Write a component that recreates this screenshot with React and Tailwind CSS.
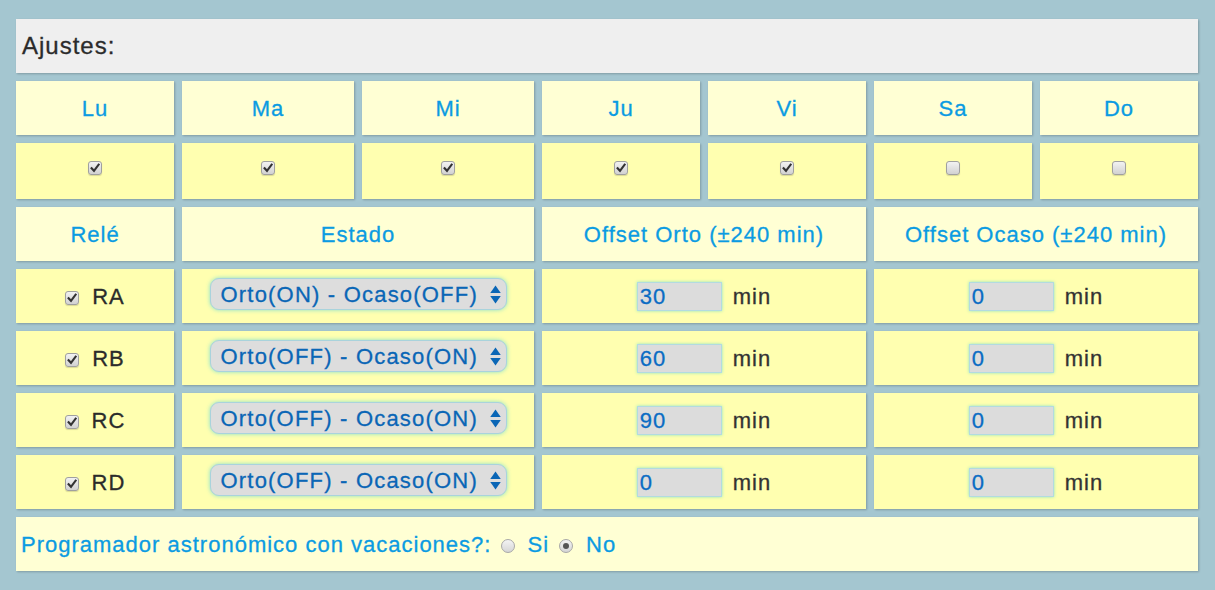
import React from 'react';

const days = [
  { label: 'Lu', on: true },
  { label: 'Ma', on: true },
  { label: 'Mi', on: true },
  { label: 'Ju', on: true },
  { label: 'Vi', on: true },
  { label: 'Sa', on: false },
  { label: 'Do', on: false },
];

const relays = [
  { name: 'RA', estado: 'Orto(ON) - Ocaso(OFF)', orto: '30', ocaso: '0' },
  { name: 'RB', estado: 'Orto(OFF) - Ocaso(ON)', orto: '60', ocaso: '0' },
  { name: 'RC', estado: 'Orto(OFF) - Ocaso(ON)', orto: '90', ocaso: '0' },
  { name: 'RD', estado: 'Orto(OFF) - Ocaso(ON)', orto: '0', ocaso: '0' },
];

const cellShadow = 'shadow-[1px_1px_2px_rgba(0,0,0,0.22)]';
const headCell = `flex items-center justify-center bg-[#ffffd4] text-[#0b9be2] ${cellShadow}`;
const dataCell = `flex items-center justify-center bg-[#ffffb0] ${cellShadow}`;

function Check({ on }) {
  return (
    <span className="inline-flex h-[14px] w-[14px] items-center justify-center rounded-[3px] border border-[#a0a0a0] bg-linear-to-b from-[#f2f2f2] to-[#d2d2d2] shadow-[0_1px_1px_rgba(0,0,0,0.15)]">
      {on && (
        <svg viewBox="0 0 10 10" className="h-[10px] w-[10px]">
          <path d="M1.6 5.2 L4 7.8 L8.6 1.6" stroke="#333" strokeWidth="2.1" fill="none" strokeLinecap="square" />
        </svg>
      )}
    </span>
  );
}

function Radio({ on }) {
  return (
    <span className="inline-flex h-[14px] w-[14px] items-center justify-center rounded-full border border-[#a8a8a8] bg-linear-to-b from-[#f4f4f4] to-[#d6d6d6]">
      {on && <span className="h-[6px] w-[6px] rounded-full bg-[#555]" />}
    </span>
  );
}

function FakeSelect({ value }) {
  return (
    <div className="flex h-[32px] w-[297px] items-center justify-between rounded-[9px] border border-[#a9d3dc] bg-[#dddddd] pl-[10px] pr-[4px] text-[#0a66b6] shadow-[0_0_4px_rgba(120,220,210,0.9)]">
      <span className="tracking-[1.2px]">{value}</span>
      <svg viewBox="0 0 12 20" className="h-[21px] w-[13px]">
        <path d="M6 1.5 L11 8.5 L1 8.5 Z" fill="#0a66b6" />
        <path d="M1 11.5 L11 11.5 L6 18.5 Z" fill="#0a66b6" />
      </svg>
    </div>
  );
}

function MinInput({ value }) {
  return (
    <div className="flex items-center gap-[11px]">
      <div className="flex h-[29px] w-[85px] items-center border border-[#b2dbe0] bg-[#dcdcdc] pl-[2px] text-[#0a6cc4] shadow-[0_0_3px_rgba(130,225,200,0.9)]">
        {value}
      </div>
      <span className="text-[#333]">min</span>
    </div>
  );
}

export default function App() {
  return (
    <div className="min-h-screen bg-[#a4c6d0] pb-[19px] pl-[16px] pr-[17px] pt-[19px] font-['Liberation_Sans',Arial,sans-serif] text-[22px] tracking-[1px] [-webkit-text-stroke:0.3px_currentColor]">
      <div className="grid grid-cols-[158px_172px_172px_158px_158px_158px_158px] grid-rows-[54px_54px_56px_54px_54px_54px_54px_54px_54px] gap-[8px]">
        <div className={`col-span-7 flex items-center bg-[#efefef] pl-[6px] text-[24px] text-[#2b2b2b] ${cellShadow}`}>
          Ajustes:
        </div>

        {days.map((d) => (
          <div key={d.label} className={headCell}>{d.label}</div>
        ))}
        {days.map((d) => (
          <div key={d.label + '-c'} className={dataCell}>
            <span className="mb-[6px] flex">
              <Check on={d.on} />
            </span>
          </div>
        ))}

        <div className={headCell}>Relé</div>
        <div className={`${headCell} col-span-2`}>Estado</div>
        <div className={`${headCell} col-span-2`}>Offset Orto (±240 min)</div>
        <div className={`${headCell} col-span-2`}>Offset Ocaso (±240 min)</div>

        {relays.map((r) => (
          <React.Fragment key={r.name}>
            <div className={`${dataCell} gap-[13px] text-[#2b2b2b]`}>
              <span className="mt-[4px] flex">
                <Check on />
              </span>
              <span>{r.name}</span>
            </div>
            <div className={`${dataCell} col-span-2 pb-[4px]`}>
              <FakeSelect value={r.estado} />
            </div>
            <div className={`${dataCell} col-span-2`}>
              <MinInput value={r.orto} />
            </div>
            <div className={`${dataCell} col-span-2`}>
              <MinInput value={r.ocaso} />
            </div>
          </React.Fragment>
        ))}

        <div className={`col-span-7 flex items-center bg-[#ffffd4] pl-[5px] text-[#0b9be2] ${cellShadow}`}>
          <span>Programador astronómico con vacaciones?:</span>
          <span className="ml-[10px] mt-[4px] flex"><Radio /></span>
          <span className="ml-[12px]">Si</span>
          <span className="ml-[10px] mt-[4px] flex"><Radio on /></span>
          <span className="ml-[13px]">No</span>
        </div>
      </div>
    </div>
  );
}
